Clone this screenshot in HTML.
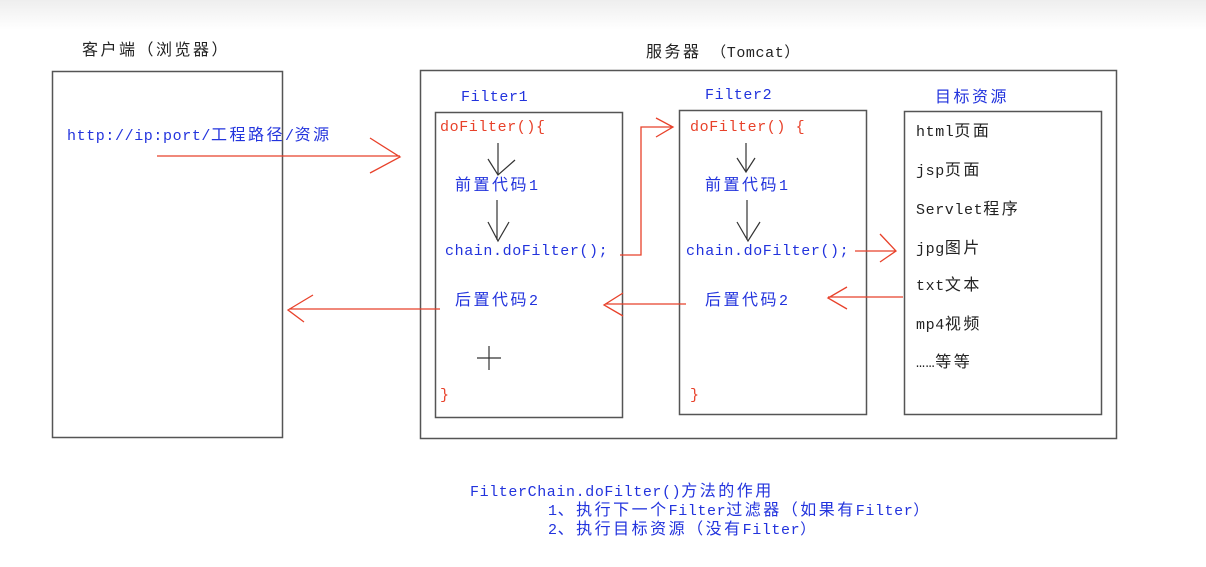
<!DOCTYPE html>
<html><head><meta charset="utf-8"><style>
body{margin:0;width:1206px;height:567px;background:#fff;overflow:hidden;position:relative;font-family:"Liberation Mono","Noto Sans CJK SC",monospace;}
.t{position:absolute;white-space:nowrap;font-size:15px;line-height:18px;letter-spacing:0.6px}
.c{font-size:16px;letter-spacing:2.5px}
.b{color:#2233dd}.r{color:#e8412a}.k{color:#222}
</style></head><body>
<div style="position:absolute;left:0;top:0;width:1206px;height:30px;background:linear-gradient(#eeeeee,#fff)"></div>
<svg width="1206" height="567" style="position:absolute;left:0;top:0" fill="none">
<g stroke="#555" stroke-width="1.5">
<rect x="52.5" y="71.5" width="230" height="366"/>
<rect x="420.5" y="70.5" width="696" height="368"/>
<rect x="435.5" y="112.5" width="187" height="305"/>
<rect x="679.5" y="110.5" width="187" height="304"/>
<rect x="904.5" y="111.5" width="197" height="303"/>
</g>
<g stroke="#e8412a" stroke-width="1.3">
<path d="M157 156H400M370 138L400 157L370 173"/>
<path d="M440 309H289M313 295L288 310L304 322"/>
<path d="M620 255H641V127H673M656 118L673 127L656 137"/>
<path d="M855 251H896M880 234L896 251L880 262"/>
<path d="M903 297H828M847 287L828 298L847 309"/>
<path d="M686 304H605M623 293L604 305L623 316"/>
</g>
<g stroke="#333" stroke-width="1.2">
<path d="M498 143V175M488 159L498 175L515 160"/>
<path d="M497 200V240M488 222L498 241L509 222"/>
<path d="M746 143V172M737 158L746 172L755 158"/>
<path d="M747 200V240M737 222L748 241L760 222"/>
<path d="M477 358H501M489 346V370"/>
</g>
</svg>
<div class="t k" style="left:82px;top:42px"><span class="c">客户端（浏览器）</span></div>
<div class="t k" style="left:646px;top:44px"><span class="c">服务器</span> （Tomcat）</div>
<div class="t b" style="left:67px;top:127px">http://ip:port/<span class="c">工程路径</span>/<span class="c">资源</span></div>
<div class="t b" style="left:461px;top:89px">Filter1</div>
<div class="t b" style="left:705px;top:87px">Filter2</div>
<div class="t b" style="left:935px;top:89px"><span class="c">目标资源</span></div>
<div class="t r" style="left:440px;top:119px">doFilter(){</div>
<div class="t r" style="left:690px;top:119px">doFilter() {</div>
<div class="t b" style="left:455px;top:177px"><span class="c">前置代码</span>1</div>
<div class="t b" style="left:705px;top:177px"><span class="c">前置代码</span>1</div>
<div class="t b" style="left:445px;top:243px">chain.doFilter();</div>
<div class="t b" style="left:686px;top:243px">chain.doFilter();</div>
<div class="t b" style="left:455px;top:292px"><span class="c">后置代码</span>2</div>
<div class="t b" style="left:705px;top:292px"><span class="c">后置代码</span>2</div>
<div class="t r" style="left:440px;top:387px">}</div>
<div class="t r" style="left:690px;top:387px">}</div>
<div class="t k" style="left:916px;top:123px">html<span class="c">页面</span></div>
<div class="t k" style="left:916px;top:162px">jsp<span class="c">页面</span></div>
<div class="t k" style="left:916px;top:201px">Servlet<span class="c">程序</span></div>
<div class="t k" style="left:916px;top:240px">jpg<span class="c">图片</span></div>
<div class="t k" style="left:916px;top:277px">txt<span class="c">文本</span></div>
<div class="t k" style="left:916px;top:316px">mp4<span class="c">视频</span></div>
<div class="t k" style="left:916px;top:354px">……<span class="c">等等</span></div>
<div class="t b" style="left:470px;top:483px">FilterChain.doFilter()<span class="c">方法的作用</span></div>
<div class="t b" style="left:548px;top:502px">1<span class="c">、执行下一个</span>Filter<span class="c">过滤器（如果有</span>Filter）</div>
<div class="t b" style="left:548px;top:521px">2<span class="c">、执行目标资源（没有</span>Filter）</div>
</body></html>
